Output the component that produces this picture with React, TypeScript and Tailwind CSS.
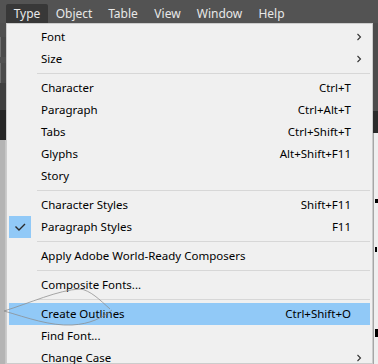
import type { ReactNode } from "react";

type Item =
  | { kind: "sep" }
  | {
      kind: "item";
      label: string;
      shortcut?: string;
      submenu?: boolean;
      checked?: boolean;
      active?: boolean;
    };

const MENU_BAR = [
  { label: "Type", w: "w-[42px]", open: true },
  { label: "Object", w: "w-[52px]" },
  { label: "Table", w: "w-[46px]" },
  { label: "View", w: "w-[43px]" },
  { label: "Window", w: "w-[61px]" },
  { label: "Help", w: "w-[43px]" },
];

const ITEMS: Item[] = [
  { kind: "item", label: "Font", submenu: true },
  { kind: "item", label: "Size", submenu: true },
  { kind: "sep" },
  { kind: "item", label: "Character", shortcut: "Ctrl+T" },
  { kind: "item", label: "Paragraph", shortcut: "Ctrl+Alt+T" },
  { kind: "item", label: "Tabs", shortcut: "Ctrl+Shift+T" },
  { kind: "item", label: "Glyphs", shortcut: "Alt+Shift+F11" },
  { kind: "item", label: "Story" },
  { kind: "sep" },
  { kind: "item", label: "Character Styles", shortcut: "Shift+F11" },
  { kind: "item", label: "Paragraph Styles", shortcut: "F11", checked: true },
  { kind: "sep" },
  { kind: "item", label: "Apply Adobe World-Ready Composers" },
  { kind: "sep" },
  { kind: "item", label: "Composite Fonts..." },
  { kind: "sep" },
  { kind: "item", label: "Create Outlines", shortcut: "Ctrl+Shift+O", active: true },
  { kind: "item", label: "Find Font..." },
  { kind: "item", label: "Change Case", submenu: true },
];

function Chevron() {
  return (
    <svg width="6" height="8" viewBox="0 0 6 8" className="text-[#333]">
      <path d="M1.5 1 L4.5 4 L1.5 7" fill="none" stroke="currentColor" strokeWidth="1.1" />
    </svg>
  );
}

function Check() {
  return (
    <svg width="12" height="9" viewBox="0 0 12 9">
      <path d="M1.5 3.5 L5 7 L11 1" fill="none" stroke="#2b2b2b" strokeWidth="1.4" />
    </svg>
  );
}

function MenuRow({ item }: { item: Extract<Item, { kind: "item" }> }) {
  return (
    <div className={`flex h-[22px] items-center ${item.active ? "bg-[#91c9f7]" : ""}`}>
      <div
        className={`flex h-[22px] w-[22px] shrink-0 items-center justify-center ${
          item.checked ? "bg-[#91c9f7]" : ""
        }`}
      >
        {item.checked && <Check />}
      </div>
      <span className="pl-[10px]">{item.label}</span>
      <span className="ml-auto pr-[19px]">{item.shortcut}</span>
      {item.submenu && (
        <span className="absolute right-[8px] flex h-[22px] items-center">
          <Chevron />
        </span>
      )}
    </div>
  );
}

function Strip({ children, className }: { children?: ReactNode; className?: string }) {
  return <div className={`flex shrink-0 flex-col ${className ?? ""}`}>{children}</div>;
}

export default function App() {
  return (
    <div
      className="relative h-[364px] w-[378px] overflow-hidden bg-[#535353] leading-none"
      style={{ fontFamily: '"Segoe UI", "Noto Sans", sans-serif' }}
    >
      <nav className="flex h-[23px] items-end pl-[6px] text-[12px] text-[#e8e8e8]">
        {MENU_BAR.map((m) => (
          <div
            key={m.label}
            className={`flex h-[19px] items-center justify-center ${m.w} ${
              m.open ? "rounded-t-[2px] bg-[#383838]" : ""
            }`}
          >
            {m.label}
          </div>
        ))}
      </nav>

      <div className="flex h-[341px]">
        <Strip className="w-[6px]">
          <div className="h-[14px] bg-[#4f4f4f]" />
          <div className="h-[20px] border-l border-[#6e6e6e] bg-[#4a4a4a]" />
          <div className="h-[6px] bg-[#505050]" />
          <div className="h-[20px] border-l border-[#6e6e6e] bg-[#4a4a4a]" />
          <div className="h-[27px] bg-[#3f3f3f]" />
          <div className="h-[30px] bg-[#262626]" />
          <div className="flex-1 border-r border-[#c6c6c6] bg-[#b4b4b4]" />
        </Strip>

        <div className="relative w-[367px] shrink-0 border border-[#cccccc] bg-[#f0f0f0] p-[2px] text-[11.5px] text-black">
          {ITEMS.map((item, i) =>
            item.kind === "sep" ? (
              <div key={i} className="flex h-[7px] items-center pl-[28px]">
                <div className="h-px w-full bg-[#d7d7d7]" />
              </div>
            ) : (
              <div key={i} className="relative">
                <MenuRow item={item} />
              </div>
            ),
          )}
        </div>

        <Strip className="w-[5px]">
          <div className="h-[88px] bg-[#4c4c4c]" />
          <div className="h-[22px] bg-[#2b2b2b]" />
          <div className="relative flex-1 border-l border-[#a6a6a6] bg-[#efefef]">
            <div className="absolute left-[1px] top-[66px] h-[4px] w-[3px] bg-black" />
            <div className="absolute left-[1px] top-[114px] h-[5px] w-[2px] bg-black" />
            <div className="absolute left-[1px] top-[196px] h-[8px] w-[4px] bg-black" />
          </div>
        </Strip>
      </div>

      <svg
        className="pointer-events-none absolute left-0 top-0"
        width="378"
        height="364"
        viewBox="0 0 378 364"
      >
        <path
          d="M4 311 C 30 303, 58 290, 80 289 C 90 290, 100 300, 110 309 M4 311 C 28 318, 50 326, 72 325 C 90 324, 102 318, 112 310"
          fill="none"
          stroke="#8c8c8c"
          strokeOpacity="0.75"
          strokeWidth="1"
        />
      </svg>
    </div>
  );
}
